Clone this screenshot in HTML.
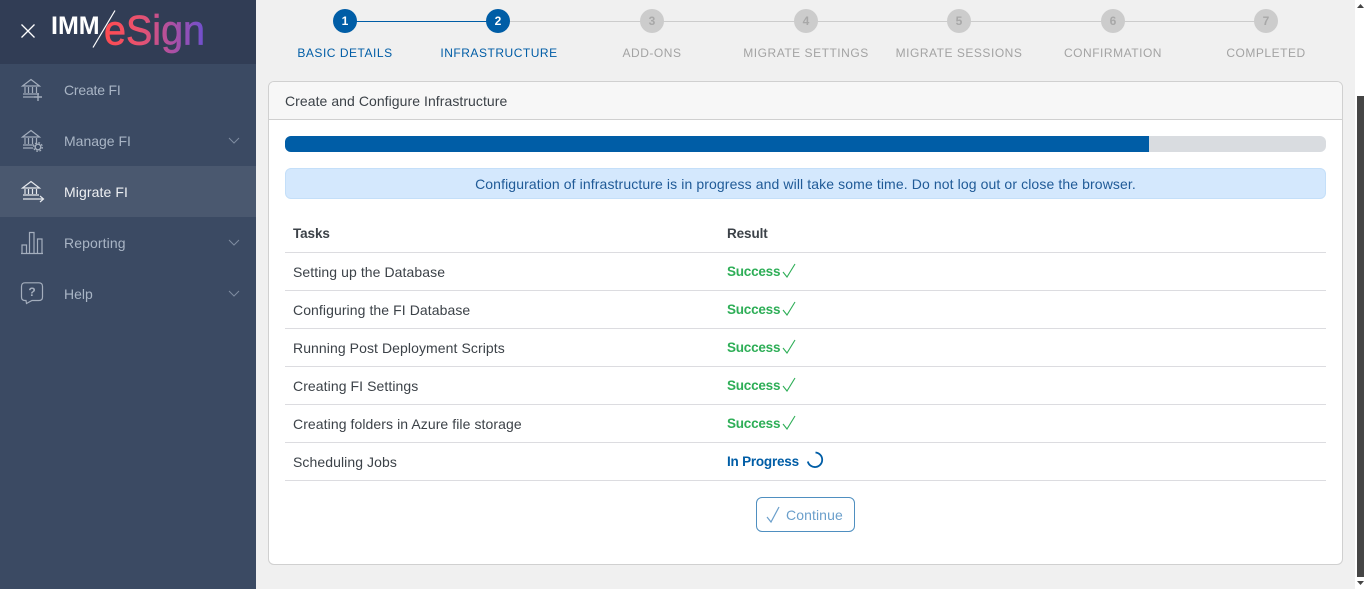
<!DOCTYPE html>
<html><head><meta charset="utf-8"><style>
*{box-sizing:border-box}
html,body{margin:0;padding:0;width:1366px;height:589px;overflow:hidden;background:#fff;font-family:"Liberation Sans",sans-serif}
.a{position:absolute;white-space:nowrap}
#main{left:256px;top:0;width:1099px;height:589px;background:#f0f0f0}
#side{left:0;top:0;width:256px;height:589px;background:#3b4a63}
#head{left:0;top:0;width:256px;height:64px;background:#313d55}
.m{left:64px;font-size:14px;color:#a9b5c5;line-height:20px}
.ic{position:absolute;fill:none;stroke:#a4aebd;stroke-width:1.2}
.c{width:24px;height:24px;border-radius:50%;background:#ccc;color:#a8a8a8;font-size:12px;font-weight:bold;text-align:center;line-height:24px;top:9px}
.c.on{background:#005da6;color:#fff}
.l{top:45px;font-size:12px;line-height:16px;color:#a3a3a3;letter-spacing:.52px;text-align:center;width:154px}
.l.on{color:#005da6}
.t{left:293px;font-size:14px;color:#3c4248;line-height:20px;letter-spacing:.08px}
.r{left:727px;font-size:13.5px;font-weight:bold;color:#2eae57;line-height:20px;letter-spacing:-.22px}
.h{left:285px;width:1041px;height:1px;background:#dcdce0}
</style></head><body>
<div class="a" id="main"></div>
<div class="a" id="side"></div>
<div class="a" id="head"></div>
<div class="a" style="left:0;top:166px;width:256px;height:51px;background:#4a586f"></div>

<svg class="a" style="left:20px;top:23px" width="16" height="16"><path d="M1.5 1.5L14.5 14.5M14.5 1.5L1.500 14.5" stroke="#fff" stroke-width="1.3"/></svg>
<div class="a" style="left:51px;top:11px;font-size:25px;font-weight:bold;color:#fff;line-height:30px">IMM</div>
<svg class="a" style="left:90px;top:8px" width="28" height="42"><path d="M25 2.5L3 39.500" stroke="#fff" stroke-width="1.2"/></svg>
<svg class="a" style="left:100px;top:4px" width="110" height="56">
<defs><linearGradient id="lg" gradientUnits="userSpaceOnUse" x1="4" y1="0" x2="106" y2="0"><stop offset="0" stop-color="#ff4b50"/><stop offset=".35" stop-color="#e8526f"/><stop offset=".7" stop-color="#a650a8"/><stop offset="1" stop-color="#6c50d0"/></linearGradient></defs>
<text x="4" y="40.500" font-family="Liberation Sans" font-size="42" textLength="101" lengthAdjust="spacingAndGlyphs" fill="url(#lg)" stroke="url(#lg)" stroke-width=".7">eSign</text>
</svg>

<svg class="ic" style="left:20px;top:78px" width="26" height="28"><path d="M2.500 8L11 1.500L19.500 8ZM5 9V15M8.500 9V15M12.500 9V15M16.500 9V15M3 16H19M3 19H14"/><path d="M18 15V23M14 19H22" stroke-width="1.400"/></svg>
<div class="a m" style="top:80px;letter-spacing:-.2px">Create FI</div>
<svg class="ic" style="left:20px;top:129px" width="26" height="28"><path d="M2.500 8L11 1.500L19.500 8ZM5 9V15M8.500 9V15M12.500 9V15M16.500 9V15M3 16H14M3 19H13"/><circle cx="18" cy="18" r="2.800" stroke-width="1.400"/><circle cx="18" cy="18" r="4.300" stroke-width="1.200" stroke-dasharray="1.800 1.600"/></svg>
<div class="a m" style="top:131px">Manage FI</div>
<svg class="ic" style="left:20px;top:180px;stroke:#e6e9ee" width="26" height="26"><path d="M2.500 8L11 1.500L19.500 8ZM5 9V14M8.500 9V14M12.500 9V14M16.500 9V14M3 15H19M3 19H23M20 16L23.500 19L20 22"/></svg>
<div class="a m" style="top:182px;color:#eef0f3;letter-spacing:.1px">Migrate FI</div>
<svg class="ic" style="left:20px;top:231px" width="26" height="26"><path d="M1 22.500H23M2 22V14H6.500V22M9.500 22V1.500H14V22M17.500 22V8H22V22"/></svg>
<div class="a m" style="top:233px;letter-spacing:.1px">Reporting</div>
<svg class="ic" style="left:20px;top:282px" width="26" height="26"><path d="M5 .8H19Q22.500 .8 22.500 4.500V15Q22.500 18.500 19 18.500H12L6.500 21.500L6 18.500H5Q1.500 18.500 1.500 15V4.500Q1.500 .8 5 .8Z"/></svg>
<div class="a" style="left:26px;top:285px;width:12px;text-align:center;font-size:12px;font-weight:bold;line-height:14px;color:#a4aebd">?</div>
<div class="a m" style="top:284px">Help</div>
<svg class="a" style="left:228px;top:137px" width="12" height="8"><path d="M1 1L6 6L11 1" fill="none" stroke="#7f8ca0"/></svg>
<svg class="a" style="left:228px;top:239px" width="12" height="8"><path d="M1 1L6 6L11 1" fill="none" stroke="#7f8ca0"/></svg>
<svg class="a" style="left:228px;top:290px" width="12" height="8"><path d="M1 1L6 6L11 1" fill="none" stroke="#7f8ca0"/></svg>

<div class="a" style="left:345px;top:21px;width:153px;height:1px;background:#005da6"></div>
<div class="a" style="left:498px;top:21px;width:768px;height:1px;background:#ccc"></div>
<div class="a c on" style="left:333px">1</div>
<div class="a c on" style="left:486px">2</div>
<div class="a c" style="left:640px">3</div>
<div class="a c" style="left:794px">4</div>
<div class="a c" style="left:947px">5</div>
<div class="a c" style="left:1101px">6</div>
<div class="a c" style="left:1254px">7</div>
<div class="a l on" style="left:268px">BASIC DETAILS</div>
<div class="a l on" style="left:422px">INFRASTRUCTURE</div>
<div class="a l" style="left:575px">ADD-ONS</div>
<div class="a l" style="left:729px">MIGRATE SETTINGS</div>
<div class="a l" style="left:882px">MIGRATE SESSIONS</div>
<div class="a l" style="left:1036px">CONFIRMATION</div>
<div class="a l" style="left:1189px">COMPLETED</div>

<div class="a" style="left:268px;top:81px;width:1075px;height:484px;background:#fff;border:1px solid #d0d0d0;border-radius:6px;overflow:hidden">
<div style="height:38px;background:#f7f7f7;border-bottom:1px solid #d0d0d0"></div></div>
<div class="a" style="left:285px;top:91px;font-size:14px;line-height:20px;color:#3c4248;letter-spacing:.06px">Create and Configure Infrastructure</div>

<div class="a" style="left:285px;top:136px;width:1041px;height:16px;background:#d9dce0;border-radius:6px;overflow:hidden"><div style="width:864px;height:16px;background:#005da6"></div></div>
<div class="a" style="left:285px;top:168px;width:1041px;height:31px;background:#d4e8fd;border:1px solid #c4dff9;border-radius:6px;text-align:center;font-size:14px;line-height:30px;color:#1f5a97;letter-spacing:.11px">Configuration of infrastructure is in progress and will take some time. Do not log out or close the browser.</div>

<div class="a t" style="top:224px;font-weight:bold;font-size:13.500px;letter-spacing:-.1px">Tasks</div>
<div class="a t" style="top:224px;left:727px;font-weight:bold;font-size:13.500px;letter-spacing:-.1px">Result</div>
<div class="a h" style="top:252px"></div>
<div class="a h" style="top:290px"></div>
<div class="a h" style="top:328px"></div>
<div class="a h" style="top:366px"></div>
<div class="a h" style="top:404px"></div>
<div class="a h" style="top:442px"></div>
<div class="a h" style="top:480px"></div>

<div class="a t" style="top:262px">Setting up the Database</div>
<div class="a t" style="top:300px">Configuring the FI Database</div>
<div class="a t" style="top:338px">Running Post Deployment Scripts</div>
<div class="a t" style="top:376px">Creating FI Settings</div>
<div class="a t" style="top:414px">Creating folders in Azure file storage</div>
<div class="a t" style="top:452px">Scheduling Jobs</div>

<div class="a r" style="top:262px">Success</div>
<div class="a r" style="top:300px">Success</div>
<div class="a r" style="top:338px">Success</div>
<div class="a r" style="top:376px">Success</div>
<div class="a r" style="top:414px">Success</div>
<div class="a r" style="top:452px;color:#005da6">In Progress</div>
<svg class="a" style="left:782px;top:263px" width="14" height="16"><path d="M1 9L5 14L13 1" fill="none" stroke="#2eae57" stroke-width="1.100"/></svg>
<svg class="a" style="left:782px;top:301px" width="14" height="16"><path d="M1 9L5 14L13 1" fill="none" stroke="#2eae57" stroke-width="1.100"/></svg>
<svg class="a" style="left:782px;top:339px" width="14" height="16"><path d="M1 9L5 14L13 1" fill="none" stroke="#2eae57" stroke-width="1.100"/></svg>
<svg class="a" style="left:782px;top:377px" width="14" height="16"><path d="M1 9L5 14L13 1" fill="none" stroke="#2eae57" stroke-width="1.100"/></svg>
<svg class="a" style="left:782px;top:415px" width="14" height="16"><path d="M1 9L5 14L13 1" fill="none" stroke="#2eae57" stroke-width="1.100"/></svg>
<svg class="a" style="left:806px;top:451px" width="18" height="18"><path d="M9.500 1.500A7.300 7.300 0 1 1 1.800 10.500" fill="none" stroke="#005da6" stroke-width="1.800"/></svg>

<div class="a" style="left:756px;top:497px;width:99px;height:35px;border:1px solid #4f8fc0;border-radius:6px;background:#fff"></div>
<svg class="a" style="left:766px;top:506px" width="15" height="18"><path d="M1 11L5 16L13 1" fill="none" stroke="#6b9fcb" stroke-width="1.200"/></svg>
<div class="a" style="left:786px;top:505px;font-size:14px;line-height:20px;color:#6b9fcb;letter-spacing:.1px">Continue</div>

<div class="a" style="left:1357px;top:96px;width:7px;height:481px;background:#454545"></div>
<svg class="a" style="left:1357px;top:3px" width="7" height="6"><path d="M3.500 1L7 5H0Z" fill="#444"/></svg>
<svg class="a" style="left:1357px;top:580px" width="7" height="6"><path d="M0 1H7L3.500 5Z" fill="#444"/></svg>
</body></html>
